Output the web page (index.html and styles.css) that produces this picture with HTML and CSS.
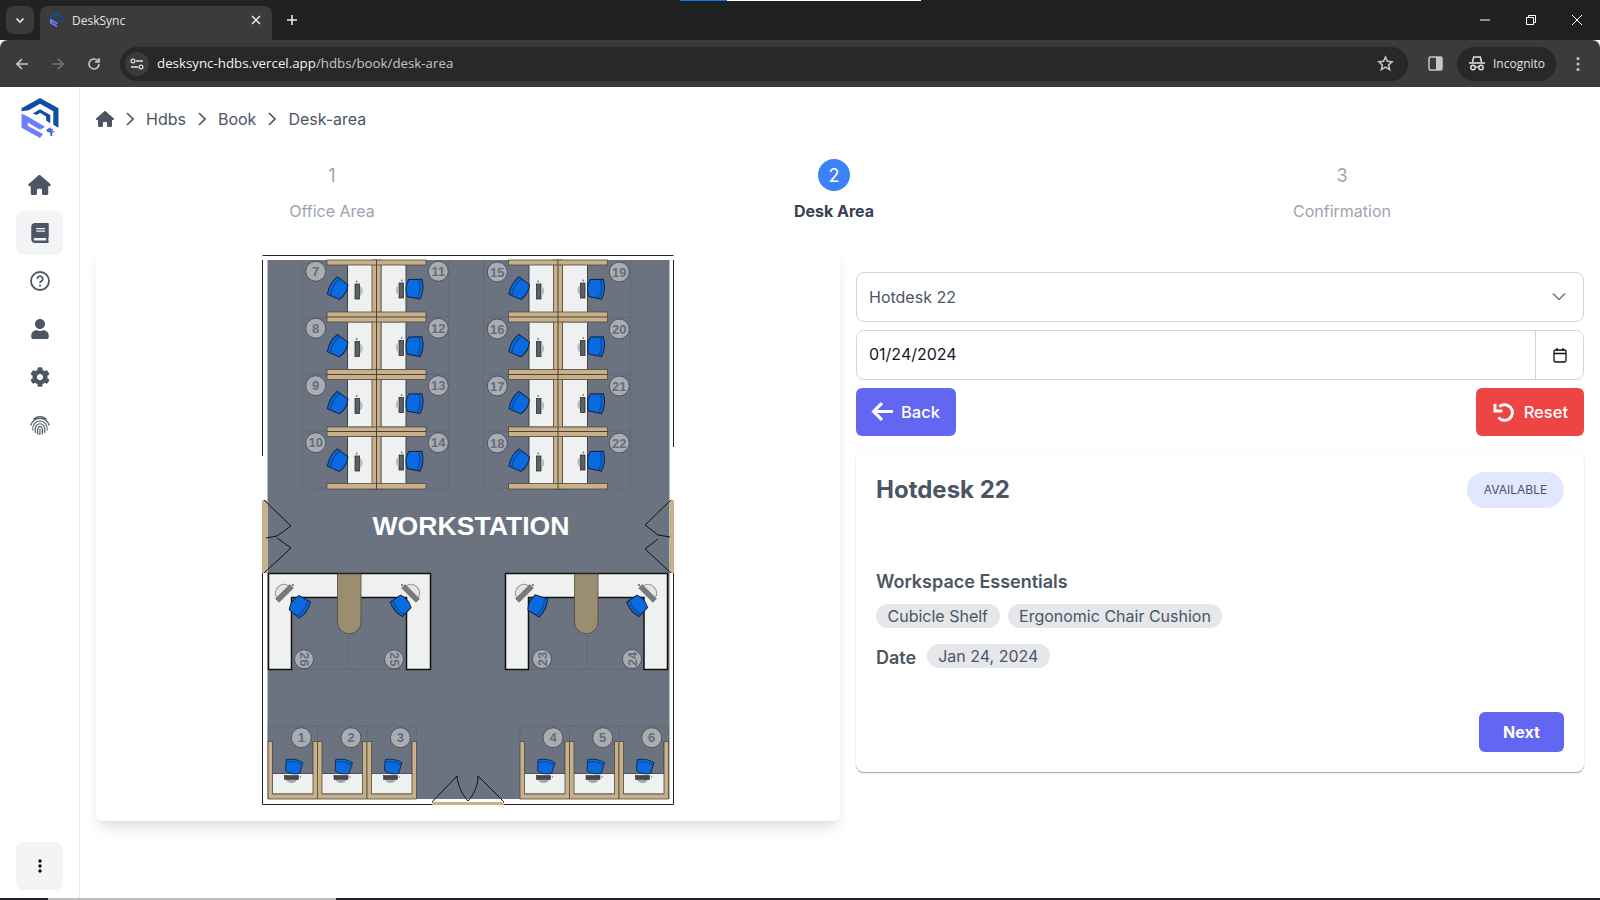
FILE: index.html
```html
<!DOCTYPE html>
<html lang="en">
<head>
    <meta charset="UTF-8">
    <title>DeskSync</title>
    <link rel="stylesheet" href="styles.css">
</head>
<body>

    <div class="load-bar"><span class="load-blue"></span><span class="load-white"></span></div>

    <!-- browser chrome -->
    <div class="tabstrip">
        <div class="tab-list">
            <svg width="12" height="12" viewBox="0 0 12 12"><path d="M2.5 4.5 6 8l3.5-3.5" fill="none" stroke="#e8eaed" stroke-width="1.6"/></svg>
        </div>
        <div class="tab">
            <svg class="favicon" width="13" height="14" viewBox="0 0 36 39">
                <path d="M0 10 18 0l18 10v19l-5-3V13L18 6 7 12l-7 1z" fill="#0b4f9e"/>
                <path d="M0 15l23 13-5 3L6 24v3l15 8-3 4L0 29z" fill="#6b7cff"/>
            </svg>
            <span class="tab-title">DeskSync</span>
            <svg width="10" height="10" viewBox="0 0 10 10"><path d="M1 1l8 8M9 1 1 9" stroke="#e8eaed" stroke-width="1.5"/></svg>
        </div>
        <div class="new-tab">
            <svg width="12" height="12" viewBox="0 0 12 12"><path d="M6 1v10M1 6h10" stroke="#e8eaed" stroke-width="1.6"/></svg>
        </div>
        <div class="win-controls">
            <div class="win-btn"><svg width="12" height="12" viewBox="0 0 12 12"><path d="M1 6h10" stroke="#fff" stroke-width="1"/></svg></div>
            <div class="win-btn"><svg width="12" height="12" viewBox="0 0 12 12"><path d="M3.5 3V1.5h7v7H9M1.5 3.5h7v7h-7z" fill="none" stroke="#fff" stroke-width="1"/></svg></div>
            <div class="win-btn"><svg width="12" height="12" viewBox="0 0 12 12"><path d="M1 1l10 10M11 1 1 11" stroke="#fff" stroke-width="1"/></svg></div>
        </div>
    </div>
    <div class="toolbar">
        <div class="tool-btn"><svg width="16" height="16" viewBox="0 0 16 16"><path d="M14 8H3M8 3 3 8l5 5" fill="none" stroke="#c7c7c7" stroke-width="1.7"/></svg></div>
        <div class="tool-btn"><svg width="16" height="16" viewBox="0 0 16 16"><path d="M2 8h11M8 3l5 5-5 5" fill="none" stroke="#737373" stroke-width="1.7"/></svg></div>
        <div class="tool-btn"><svg width="16" height="16" viewBox="0 0 16 16"><path d="M13 8a5 5 0 1 1-1.6-3.7L13 6M13 2v4H9" fill="none" stroke="#c7c7c7" stroke-width="1.6"/></svg></div>
        <div class="omnibox">
            <div class="site-info">
                <svg width="14" height="12" viewBox="0 0 14 12"><path d="M6 3h7M1 9h7" stroke="#e3e3e3" stroke-width="1.4"/><circle cx="3" cy="3" r="1.9" fill="none" stroke="#e3e3e3" stroke-width="1.2"/><circle cx="11" cy="9" r="1.9" fill="none" stroke="#e3e3e3" stroke-width="1.2"/></svg>
            </div>
            <div class="url"><span class="url-host">desksync-hdbs.vercel.app</span>/hdbs/book/desk-area</div>
            <svg class="star" width="17" height="17" viewBox="0 0 24 24"><path d="M12 3l2.8 6 6.5.7-4.9 4.4 1.4 6.5L12 17.2 6.2 20.6l1.4-6.5L2.7 9.700l6.500-.7z" fill="none" stroke="#c7c7c7" stroke-width="2.2"/></svg>
        </div>
        <div class="tool-btn panel-btn"><svg width="15" height="15" viewBox="0 0 15 15"><rect x="1" y="1" width="13" height="13" rx="1.5" fill="none" stroke="#c7c7c7" stroke-width="1.5"/><rect x="8" y="1" width="6" height="13" fill="#c7c7c7"/></svg></div>
        <div class="incognito">
            <svg width="16" height="15" viewBox="0 0 16 15"><path d="M3.500 6 4.700 1h6.600l1.200 5M0 7h16" fill="none" stroke="#e3e3e3" stroke-width="1.500"/><circle cx="4" cy="11.500" r="2.200" fill="none" stroke="#e3e3e3" stroke-width="1.400"/><circle cx="12" cy="11.500" r="2.200" fill="none" stroke="#e3e3e3" stroke-width="1.400"/><path d="M6.200 11h3.600" stroke="#e3e3e3" stroke-width="1.200"/></svg>
            <span>Incognito</span>
        </div>
        <div class="tool-btn"><svg width="4" height="16" viewBox="0 0 4 16"><circle cx="2" cy="2.500" r="1.500" fill="#c7c7c7"/><circle cx="2" cy="8" r="1.500" fill="#c7c7c7"/><circle cx="2" cy="13.500" r="1.500" fill="#c7c7c7"/></svg></div>
    </div>

    <div class="app">
        <div class="sidebar">
            <div>
                <svg class="logo" width="38" height="40" viewBox="0 0 36 39">
                    <path d="M0 10 18 0l18 10v19l-5-3V13L18 5.500 7 12l-7 1z" fill="#0b4f9e"/>
                    <path d="M11 15l7-4 10 5.500v8L24 22v-4l-6-3.500-3 2z" fill="#0b4f9e"/>
                    <path d="M0 15l6 3 17 10-5 3L6 24v3l15 8-3 4L0 29z" fill="#6b7cff"/>
                    <path d="M24 31l4-2.500 1 2 2-1-1 3h3l-3 1.500V37h-2v-3l-3-1z" fill="#3f6fd8"/>
                </svg>
                <div class="nav">
                    <div class="nav-item">
                        <svg width="23" height="20" viewBox="0 0 576 512"><path d="M575.800 255.500c0 18-15 32.100-32 32.100h-32l.7 160.200c0 2.700-.2 5.400-.5 8.100V472c0 22.100-17.900 40-40 40H456c-1.100 0-2.200 0-3.300-.1-1.400.1-2.800.1-4.200.1H392c-22.100 0-40-17.900-40-40v-88c0-17.700-14.300-32-32-32H256c-17.700 0-32 14.300-32 32v88c0 22.100-17.900 40-40 40H128.100c-1.500 0-3-.1-4.500-.2-1.200.1-2.400.2-3.600.2H104c-22.100 0-40-17.900-40-40V360c0-.9 0-1.900.1-2.800V287.600H32c-18 0-32-14-32-32.100 0-9 3-17 10-24L266.400 8c7-7 15-8 22-8s15 2 21 7L564.800 231.500c8 7 12 15 11 24z"/></svg>
                    </div>
                    <div class="nav-item active">
                        <svg width="18" height="20" viewBox="0 0 448 512"><path d="M448 360V24c0-13.3-10.7-24-24-24H96C43 0 0 43 0 96v320c0 53 43 96 96 96h328c13.3 0 24-10.7 24-24v-16c0-7.5-3.5-14.3-8.9-18.7-4.2-15.4-4.2-59.3 0-74.7 5.4-4.3 8.9-11.1 8.900-18.600zM128 134c0-3.300 2.700-6 6-6h212c3.300 0 6 2.700 6 6v20c0 3.300-2.700 6-6 6H134c-3.300 0-6-2.700-6-6v-20zm0 64c0-3.300 2.700-6 6-6h212c3.300 0 6 2.700 6 6v20c0 3.300-2.700 6-6 6H134c-3.300 0-6-2.700-6-6v-20zm253.400 250H96c-17.700 0-32-14.300-32-32 0-17.600 14.400-32 32-32h285.400c-1.900 17.100-1.900 46.900 0 64z"/></svg>
                    </div>
                    <div class="nav-item">
                        <svg width="20" height="20" viewBox="0 0 20 20"><circle cx="10" cy="10" r="9" fill="none" stroke="#4b5563" stroke-width="1.800"/><path d="M7.300 7.800a2.700 2.700 0 1 1 4.200 2.300c-1 .6-1.500 1-1.500 2" fill="none" stroke="#4b5563" stroke-width="1.800"/><circle cx="10" cy="14.600" r="1.100"/></svg>
                    </div>
                    <div class="nav-item">
                        <svg width="18" height="20" viewBox="0 0 448 512"><path d="M224 256c70.700 0 128-57.300 128-128S294.700 0 224 0 96 57.300 96 128s57.300 128 128 128zm89.600 32h-16.700c-22.200 10.200-46.900 16-72.900 16s-50.600-5.800-72.900-16h-16.700C60.200 288 0 348.200 0 422.400V464c0 26.500 21.500 48 48 48h352c26.500 0 48-21.500 48-48v-41.600c0-74.200-60.200-134.400-134.400-134.400z"/></svg>
                    </div>
                    <div class="nav-item">
                        <svg width="20" height="20" viewBox="0 0 512 512"><path d="M487.400 315.700l-42.600-24.600c4.300-23.200 4.300-47 0-70.200l42.600-24.600c4.900-2.800 7.100-8.600 5.500-14-11.100-35.600-30-67.800-54.700-94.600-3.800-4.100-10-5.100-14.800-2.300L380.800 110c-17.900-15.400-38.500-27.300-60.800-35.100V25.800c0-5.600-3.900-10.500-9.400-11.700-36.700-8.200-74.300-7.800-109.200 0-5.500 1.200-9.400 6.100-9.400 11.700V75c-22.200 7.900-42.800 19.800-60.800 35.100L88.700 85.500c-4.900-2.800-11-1.900-14.800 2.300-24.700 26.700-43.600 58.900-54.700 94.600-1.700 5.400.6 11.200 5.500 14L67.300 221c-4.300 23.200-4.300 47 0 70.200l-42.600 24.600c-4.900 2.800-7.100 8.600-5.500 14 11.100 35.600 30 67.800 54.700 94.600 3.800 4.100 10 5.100 14.800 2.300l42.600-24.600c17.900 15.400 38.500 27.300 60.800 35.100v49.200c0 5.600 3.900 10.500 9.400 11.700 36.700 8.200 74.300 7.800 109.200 0 5.500-1.200 9.400-6.100 9.400-11.700v-49.200c22.200-7.900 42.800-19.800 60.800-35.100l42.600 24.600c4.900 2.800 11 1.900 14.800-2.300 24.700-26.700 43.600-58.900 54.700-94.600 1.500-5.500-.7-11.300-5.600-14.100zM256 336c-44.100 0-80-35.900-80-80s35.900-80 80-80 80 35.900 80 80-35.900 80-80 80z"/></svg>
                    </div>
                    <div class="nav-item">
                        <svg width="20" height="20" viewBox="0 0 20 20" fill="none" stroke="#4b5563" stroke-width="1.150"><path d="M3.500 4.500C7 .6 13 .6 16.500 4.500"/><path d="M.8 10.500C2.300 5.500 6 3.300 10 3.300s7.700 2.200 9.200 7.200"/><path d="M2.800 15.500C2.300 9.500 5.500 6 10 6s7.700 3.500 7.200 9.500"/><path d="M5.300 18C4.600 12 6.700 8.700 10 8.700s5.400 3.300 4.700 9.300"/><path d="M7.800 19.500C7 14.500 8.200 11.300 10 11.300s3 3.200 2.200 8.200"/><path d="M10 14c0 2.500 0 4-.2 6"/></svg>
                    </div>
                </div>
            </div>
            <div class="more-btn">
                <svg width="4" height="14" viewBox="0 0 4 14"><circle cx="2" cy="2" r="1.700" fill="#111"/><circle cx="2" cy="7" r="1.700" fill="#111"/><circle cx="2" cy="12" r="1.700" fill="#111"/></svg>
            </div>
        </div>

        <div class="content">
            <div class="breadcrumb">
                <svg width="18" height="16" viewBox="0 0 576 512"><path d="M575.800 255.500c0 18-15 32.100-32 32.100h-32l.7 160.200c0 2.700-.2 5.400-.5 8.100V472c0 22.100-17.900 40-40 40H456c-1.100 0-2.200 0-3.300-.1-1.400.1-2.800.1-4.200.1H392c-22.100 0-40-17.900-40-40v-88c0-17.700-14.300-32-32-32H256c-17.700 0-32 14.300-32 32v88c0 22.100-17.900 40-40 40H128.100c-1.500 0-3-.1-4.500-.2-1.200.1-2.400.2-3.600.2H104c-22.100 0-40-17.900-40-40V360c0-.9 0-1.900.1-2.800V287.600H32c-18 0-32-14-32-32.100 0-9 3-17 10-24L266.400 8c7-7 15-8 22-8s15 2 21 7L564.800 231.500c8 7 12 15 11 24z"/></svg>
                <svg class="crumb-sep" width="8" height="14" viewBox="0 0 8 14"><path d="M1 1l6 6-6 6" fill="none" stroke="#4b5563" stroke-width="1.600"/></svg>
                <span>Hdbs</span>
                <svg class="crumb-sep" width="8" height="14" viewBox="0 0 8 14"><path d="M1 1l6 6-6 6" fill="none" stroke="#4b5563" stroke-width="1.600"/></svg>
                <span>Book</span>
                <svg class="crumb-sep" width="8" height="14" viewBox="0 0 8 14"><path d="M1 1l6 6-6 6" fill="none" stroke="#4b5563" stroke-width="1.600"/></svg>
                <span>Desk-area</span>
            </div>

            <div class="stepper">
                <div class="step">
                    <div class="step-num">1</div>
                    <div class="step-label">Office Area</div>
                </div>
                <div class="step current">
                    <div class="step-num">2</div>
                    <div class="step-label">Desk Area</div>
                </div>
                <div class="step">
                    <div class="step-num">3</div>
                    <div class="step-label">Confirmation</div>
                </div>
            </div>

            <div class="columns">
                <div class="map-card">
                    <svg class="floorplan" width="412" height="550" viewBox="262 255 412 550">
                        <defs>
                            <g id="chair">
                                <path d="M-10-7Q0-11 10-7L8.500 6Q0 10-8.500 6Z" fill="#0a6be0" stroke="#16233a" stroke-width="1"/>
                                <path d="M-9.500-4Q0-8 9.500-4" fill="none" stroke="#0a4fa8" stroke-width="1.600"/>
                            </g>
                            <g id="pc">
                                <rect x="-2" y="-7" width="4.500" height="15" fill="#5b5f66" stroke="#2f3237" stroke-width=".8"/>
                                <path d="M3-5A6 6 0 0 1 3 5Z" fill="#b8bbbf"/>
                                <circle cx="-.3" cy="-9.500" r=".9" fill="#777"/>
                            </g>
                            <g id="pc-low">
                                <rect x="-7" y="-2" width="14" height="4" fill="#44474d" stroke="#2f3237" stroke-width=".6"/>
                                <path d="M-5 2.500A5 3 0 0 0 5 2.500Z" fill="#a2a5a9"/>
                                <circle cx="9" cy="-.500" r=".8" fill="#777"/>
                            </g>
                            <g id="keyboard">
                                <rect x="-10" y="-.5" width="20" height="5" fill="#777a7f" stroke="#55585e" stroke-width=".6"/>
                                <path d="M-8-1A8 6 0 0 1 8-1" fill="#e4e5e6" stroke="#8e9196" stroke-width="1"/>
                                <circle cx="12" cy="2" r="1" fill="#666"/>
                            </g>
                            <g id="bay">
                                <rect x="347.500" y="265" width="24.500" height="47" fill="#eff0f0"/>
                                <rect x="381.500" y="265" width="24.500" height="47" fill="#eff0f0"/>
                                <path d="M347.500 265V312M406 265V312" stroke="#3f4650" stroke-width="1"/>
                                <use href="#chair" transform="translate(338.500 289) rotate(-60)"/>
                                <use href="#chair" transform="translate(414 288.500) rotate(95)"/>
                                <use href="#pc" transform="translate(357 291)"/>
                                <use href="#pc" transform="translate(401.500 290) scale(-1 1)"/>
                            </g>
                            <g id="cluster">
                                <g class="dots">
                                    <path d="M302 260V488M449 260V488M302 317H449M302 374H449M302 431H449M302 488H449"/>
                                </g>
                                <use href="#bay"/>
                                <use href="#bay" y="57.500"/>
                                <use href="#bay" y="114.500"/>
                                <use href="#bay" y="172"/>
                                <rect x="372" y="260" width="9" height="229" class="tan"/>
                                <rect x="327" y="260" width="99" height="5" class="tan"/>
                                <rect x="327" y="312" width="99" height="10" class="tan"/>
                                <rect x="327" y="369.500" width="99" height="10" class="tan"/>
                                <rect x="327" y="427" width="99" height="9.500" class="tan"/>
                                <rect x="327" y="483.500" width="99" height="5.500" class="tan"/>
                                <path d="M376.500 260V489M327 317H426M327 374.500H426M327 431.500H426" stroke="#4a4436" stroke-width="1"/>
                            </g>
                            <g id="cubicle">
                                <rect x="268" y="773.500" width="49" height="20" fill="#eff0f0"/>
                                <path d="M272 741.500V773.500H313V741.500" fill="none" stroke="#4d5561" stroke-width="1"/>
                                <path d="M268 741.500H272.500V794H313V741.500H317.500V799H268Z" class="tan"/>
                                <use href="#chair" transform="translate(293.500 767) rotate(10) scale(.85)"/>
                                <use href="#pc-low" transform="translate(291.500 777.500)"/>
                            </g>
                            <g id="cubicles">
                                <path class="dots" d="M268 741V726H416.500V741M317.500 726V741M367 726V741"/>
                                <use href="#cubicle"/>
                                <use href="#cubicle" x="49.500"/>
                                <use href="#cubicle" x="99"/>
                            </g>
                        </defs>

                        <rect x="262" y="255" width="412" height="550" fill="#fff"/>
                        <rect x="267.500" y="260" width="402" height="539" fill="#6b7280"/>
                        <path d="M262.500 255.500H673.500M262.500 260V456M673.500 260V447M262.500 570V804.500H432M504 804.500H673.500V570" fill="none" stroke="#222" stroke-width="1"/>

                        <!-- doors -->
                        <rect x="262" y="500" width="5.500" height="73" class="door"/>
                        <rect x="669.500" y="500" width="4.500" height="73" class="door"/>
                        <rect x="432" y="802" width="72" height="3" class="door"/>
                        <path class="swing" d="M264 500 291 526 277 536 266 538M264 573 291 548 277 538"/>
                        <path class="swing" d="M671 500 645 525 658 535 670 537M671 573 645 549 658 539"/>
                        <path class="swing" d="M432 802 457 776C458 786 462 794 468 801M504 802 478 776C478 786 474 794 468 801"/>

                        <use href="#cluster"/>
                        <use href="#cluster" x="181.500"/>

                        <g class="seat">
                            <circle cx="315.700" cy="271.300" r="10"/><text x="315.700" y="276">7</text>
                            <circle cx="315.700" cy="328.300" r="10"/><text x="315.700" y="333">8</text>
                            <circle cx="315.700" cy="385.700" r="10"/><text x="315.700" y="390.400">9</text>
                            <circle cx="315.700" cy="442.700" r="10"/><text x="315.700" y="447.400">10</text>
                            <circle cx="438.300" cy="271.300" r="10"/><text x="438.300" y="276">11</text>
                            <circle cx="438.300" cy="328.300" r="10"/><text x="438.300" y="333">12</text>
                            <circle cx="438.300" cy="385.700" r="10"/><text x="438.300" y="390.400">13</text>
                            <circle cx="438.300" cy="442.700" r="10"/><text x="438.300" y="447.400">14</text>
                            <circle cx="497.300" cy="272" r="10"/><text x="497.300" y="276.700">15</text>
                            <circle cx="497.300" cy="329" r="10"/><text x="497.300" y="333.700">16</text>
                            <circle cx="497.300" cy="386" r="10"/><text x="497.300" y="390.700">17</text>
                            <circle cx="497.300" cy="443" r="10"/><text x="497.300" y="447.700">18</text>
                            <circle cx="619.300" cy="272" r="10"/><text x="619.300" y="276.700">19</text>
                            <circle cx="619.300" cy="329" r="10"/><text x="619.300" y="333.700">20</text>
                            <circle cx="619.300" cy="386" r="10"/><text x="619.300" y="390.700">21</text>
                            <circle cx="619.300" cy="443" r="10"/><text x="619.300" y="447.700">22</text>
                        </g>

                        <text class="plan-title" x="471" y="534.500">WORKSTATION</text>

                        <!-- corner desks -->
                        <path class="dots" d="M291.500 669.500H406.500M348.500 633V669.500"/>
                        <path class="corner" d="M268.500 573.500H430.500V669.500H406.500V597.500H291.500V669.500H268.500Z"/>
                        <path class="pill" d="M337.500 574V622a11.750 11.750 0 0 0 23.500 0V574Z"/>
                        <path class="dots" d="M528.500 669.500H644M587 633V669.500"/>
                        <path class="corner" d="M505.500 573.500H667.500V669.500H644V597.500H528.500V669.500H505.500Z"/>
                        <path class="pill" d="M574.500 574V622a11.750 11.750 0 0 0 23.500 0V574Z"/>
                        <use href="#chair" transform="translate(299 606) rotate(125)"/>
                        <use href="#chair" transform="translate(401.500 605) rotate(-130) scale(.95)"/>
                        <use href="#chair" transform="translate(537 605) rotate(115)"/>
                        <use href="#chair" transform="translate(638 605) rotate(-130) scale(.95)"/>
                        <use href="#keyboard" transform="translate(283 592) rotate(-45)"/>
                        <use href="#keyboard" transform="translate(412 592) rotate(45) scale(-1 1)"/>
                        <use href="#keyboard" transform="translate(523 592) rotate(-45)"/>
                        <use href="#keyboard" transform="translate(649 592) rotate(45) scale(-1 1)"/>
                        <g class="seat">
                            <circle cx="304" cy="659.300" r="9.500"/><text transform="translate(304 659.300) rotate(90)" y="4.500">26</text>
                            <circle cx="394" cy="659.300" r="9.500"/><text transform="translate(394 659.300) rotate(90)" y="4.500">25</text>
                            <circle cx="542" cy="659" r="9.500"/><text transform="translate(542 659) rotate(-90)" y="4.500">23</text>
                            <circle cx="632" cy="659" r="9.500"/><text transform="translate(632 659) rotate(-90)" y="4.500">24</text>
                        </g>

                        <!-- bottom row -->
                        <use href="#cubicles"/>
                        <use href="#cubicles" x="252"/>
                        <g class="seat">
                            <circle cx="301.300" cy="737.700" r="10"/><text x="301.300" y="742.400">1</text>
                            <circle cx="351" cy="737.700" r="10"/><text x="351" y="742.400">2</text>
                            <circle cx="400.300" cy="737.700" r="10"/><text x="400.300" y="742.400">3</text>
                            <circle cx="553" cy="737.700" r="10"/><text x="553" y="742.400">4</text>
                            <circle cx="602.700" cy="737.700" r="10"/><text x="602.700" y="742.400">5</text>
                            <circle cx="651.700" cy="737.700" r="10"/><text x="651.700" y="742.400">6</text>
                        </g>
                    </svg>
                </div>

                <div class="form-col">
                    <div class="field field-select">
                        <span>Hotdesk 22</span>
                        <svg width="16" height="10" viewBox="0 0 16 10"><path d="M2 1.500l6 6 6-6" fill="none" stroke="#6b7280" stroke-width="1.500"/></svg>
                    </div>
                    <div class="field field-date">
                        <span class="date-value">01/24/2024</span>
                        <div class="date-btn">
                            <svg width="14" height="16" viewBox="0 0 14 16"><rect x="1" y="3" width="12" height="12" rx="1.500" fill="none" stroke="#111" stroke-width="1.300"/><path d="M1 6.500h12M4 1v3M10 1v3" stroke="#111" stroke-width="1.300"/></svg>
                        </div>
                    </div>
                    <div class="actions">
                        <button class="btn btn-back">
                            <svg width="23" height="21" viewBox="0 0 22 20"><path d="M21 10H3M10.500 2 2.500 10l8 8" fill="none" stroke="#fff" stroke-width="3"/></svg>
                            Back
                        </button>
                        <button class="btn btn-reset">
                            <svg width="22" height="22" viewBox="0 0 22 22"><path d="M6.500 5.500a8 8 0 1 1-1 11" fill="none" stroke="#fff" stroke-width="3"/><path d="M2 2.500V10h7.500" fill="none" stroke="#fff" stroke-width="3"/></svg>
                            Reset
                        </button>
                    </div>

                    <div class="desk-card">
                        <div class="desk-head">
                            <h2>Hotdesk 22</h2>
                            <span class="badge">AVAILABLE</span>
                        </div>
                        <h3>Workspace Essentials</h3>
                        <div class="chips">
                            <span class="chip">Cubicle Shelf</span>
                            <span class="chip">Ergonomic Chair Cushion</span>
                        </div>
                        <div class="date-row">
                            <span class="date-label">Date</span>
                            <span class="chip">Jan 24, 2024</span>
                        </div>
                        <div class="desk-foot">
                            <button class="btn-next">Next</button>
                        </div>
                    </div>
                </div>
            </div>
        </div>
    </div>

    <div class="taskbar"><span class="task-light"></span></div>

</body>
</html>
```

FILE: styles.css
```css
* {
    box-sizing: border-box;
}
body {
    margin: 0;
    height: 900px;
    overflow: hidden;
    display: flex;
    flex-direction: column;
    background-color: #fff;
    font-family: Inter, "Liberation Sans", sans-serif;
    color: #4b5563;
}
.load-bar {
    position: absolute;
    top: 0;
    left: 680px;
    display: flex;
    height: 1px;
}
.load-blue {
    width: 47px;
    background-color: #1a73e8;
}
.load-white {
    width: 194px;
    background-color: #fff;
}

/* browser chrome */
.tabstrip {
    height: 40px;
    flex: none;
    display: flex;
    align-items: flex-start;
    padding: 6px 0 0 6px;
    background-color: #202222;
}
.tab-list {
    width: 28px;
    height: 28px;
    margin-right: 6px;
    display: flex;
    align-items: center;
    justify-content: center;
    background-color: #3b3b3b;
    border-radius: 8px;
}
.tab {
    width: 232px;
    height: 34px;
    display: flex;
    align-items: center;
    padding: 0 11px 6px 10px;
    background-color: #3b3b3b;
    border-radius: 8px 8px 0 0;
    color: #e3e3e3;
    font-family: "Open Sans", sans-serif;
    font-size: 12px;
}
.tab-title {
    flex: 1;
    margin-left: 9px;
}
.new-tab {
    width: 28px;
    height: 28px;
    margin-left: 6px;
    display: flex;
    align-items: center;
    justify-content: center;
}
.win-controls {
    display: flex;
    margin-left: auto;
    margin-top: -6px;
}
.win-btn {
    width: 46px;
    height: 40px;
    display: flex;
    align-items: center;
    justify-content: center;
}
.toolbar {
    height: 47px;
    flex: none;
    display: flex;
    align-items: center;
    padding: 0 4px;
    background-color: #3b3b3b;
    border-radius: 8px 8px 0 0;
}
.tool-btn {
    width: 36px;
    height: 34px;
    display: flex;
    align-items: center;
    justify-content: center;
}
.panel-btn {
    margin-left: 9px;
    margin-right: 4px;
}
.omnibox {
    width: 1288px;
    height: 34px;
    margin-left: 8px;
    display: flex;
    align-items: center;
    padding: 0 14px 0 5px;
    background-color: #282828;
    border-radius: 17px;
}
.site-info {
    width: 24px;
    height: 24px;
    display: flex;
    align-items: center;
    justify-content: center;
    background-color: #3b3b3b;
    border-radius: 50%;
}
.url {
    flex: 1;
    margin-left: 8px;
    padding-bottom: 2px;
    color: #c4c7c5;
    font-family: "Open Sans", sans-serif;
    font-size: 13.300px;
}
.url-host {
    color: #f1f1f1;
}
.incognito {
    width: 99px;
    height: 34px;
    margin-right: 4px;
    display: flex;
    align-items: center;
    gap: 8px;
    padding: 0 0 1px 12px;
    background-color: #282828;
    border-radius: 17px;
    color: #e3e3e3;
    font-family: "Open Sans", sans-serif;
    font-size: 12px;
}

/* app */
.app {
    flex: 1;
    display: flex;
    min-height: 0;
}
.sidebar {
    width: 80px;
    flex: none;
    display: flex;
    flex-direction: column;
    justify-content: space-between;
    padding: 11px 16px 8px;
    border-right: 1px solid #e5e7eb;
}
.logo {
    display: block;
    margin-left: 5px;
}
.nav {
    display: flex;
    flex-direction: column;
    gap: 4px;
    margin-top: 24.500px;
}
.nav-item {
    height: 44px;
    display: flex;
    align-items: center;
    justify-content: center;
    border-radius: 8px;
    fill: #4b5563;
}
.nav-item.active {
    background-color: #f3f4f6;
}
.more-btn {
    height: 48px;
    display: flex;
    align-items: center;
    justify-content: center;
    background-color: #f3f4f6;
    border-radius: 8px;
}
.content {
    flex: 1;
    padding: 20px 16px 0;
    min-width: 0;
}
.breadcrumb {
    height: 24px;
    display: flex;
    align-items: center;
    gap: 12px;
    fill: #4b5563;
    font-size: 16px;
}
.stepper {
    display: grid;
    grid-template-columns: 472px 532px 484px;
    margin-top: 28px;
}
.step {
    display: flex;
    flex-direction: column;
    align-items: center;
    color: #9ca3af;
}
.step-num {
    width: 32px;
    height: 32px;
    display: flex;
    align-items: center;
    justify-content: center;
    border-radius: 50%;
    font-size: 18px;
}
.step-label {
    margin-top: 10px;
    line-height: 20px;
    font-size: 16px;
}
.step.current .step-num {
    background-color: #3b82f6;
    color: #fff;
}
.step.current .step-label {
    color: #374151;
    font-weight: 700;
}
.columns {
    display: grid;
    grid-template-columns: 744px 728px;
    gap: 16px;
    margin-top: 29px;
}
.map-card {
    height: 571px;
    padding-top: 5px;
    background-color: #fff;
    border-radius: 8px;
    box-shadow: 0 10px 15px -3px rgba(0, 0, 0, 0.1), 0 4px 6px -2px rgba(0, 0, 0, 0.05);
}
.floorplan {
    display: block;
    margin: 0 auto;
}
.tan {
    fill: #c8b08a;
    stroke: #4f4a3c;
    stroke-width: .8;
}
.door {
    fill: #c8b08a;
}
.dots {
    fill: none;
    stroke: #4f5664;
    stroke-width: .8;
    stroke-dasharray: 1 1.500;
}
.swing {
    fill: none;
    stroke: #111;
    stroke-width: 1;
}
.corner {
    fill: #eff0f0;
    stroke: #111;
    stroke-width: 1.500;
}
.pill {
    fill: #9b8d70;
    stroke: #4f4a3c;
    stroke-width: .8;
}
.seat circle {
    fill: #a9acb1;
    stroke: #4d5461;
    stroke-width: 1;
}
.seat text {
    fill: #666d79;
    font-family: "Liberation Sans", sans-serif;
    font-size: 13px;
    font-weight: 700;
    text-anchor: middle;
}
.plan-title {
    fill: #fff;
    font-family: "Liberation Sans", sans-serif;
    font-size: 26.600px;
    font-weight: 700;
    text-anchor: middle;
}

/* right column */
.form-col {
    padding-top: 22px;
}
.field {
    height: 50px;
    display: flex;
    align-items: center;
    margin-bottom: 8px;
    border: 1px solid #d1d5db;
    border-radius: 8px;
    font-size: 16px;
}
.field-select {
    justify-content: space-between;
    padding: 0 16px 0 12px;
    color: #4b5563;
}
.date-value {
    flex: 1;
    padding: 0 0 2px 12px;
    color: #111827;
}
.date-btn {
    width: 48px;
    height: 100%;
    display: flex;
    align-items: center;
    justify-content: center;
    border-left: 1px solid #d1d5db;
}
.actions {
    display: flex;
    justify-content: space-between;
    margin-bottom: 16px;
}
.btn {
    height: 48px;
    display: flex;
    align-items: center;
    gap: 7px;
    padding: 0 16px 1px;
    border: none;
    border-radius: 6px;
    color: #fff;
    font-family: inherit;
    font-size: 16.500px;
    font-weight: 500;
}
.btn-back {
    width: 100px;
    padding-left: 15px;
    background-color: #6366f1;
}
.btn-reset {
    width: 108px;
    gap: 9px;
    padding-left: 17px;
    background-color: #ef4444;
}
.desk-card {
    height: 320px;
    padding: 20px;
    background-color: #fff;
    border-radius: 8px;
    box-shadow: 0 1px 1px rgba(0, 0, 0, 0.35), 0 0 3px rgba(0, 0, 0, 0.06);
}
.desk-head {
    display: flex;
    justify-content: space-between;
    align-items: flex-start;
    height: 98px;
}
.desk-head h2 {
    margin: 1px 0 0;
    line-height: 34px;
    font-size: 24px;
    font-weight: 700;
}
.badge {
    width: 97px;
    height: 36px;
    display: flex;
    align-items: center;
    justify-content: center;
    padding-bottom: 1px;
    background-color: #e0e7ff;
    border-radius: 18px;
    font-size: 12px;
}
.desk-card h3 {
    margin: 0;
    line-height: 24px;
    font-size: 18px;
    font-weight: 600;
}
.chips {
    display: flex;
    gap: 8px;
    margin-top: 10px;
}
.chip {
    height: 24px;
    display: inline-flex;
    align-items: center;
    padding: 0 11.500px;
    background-color: #e5e7eb;
    border-radius: 12px;
    font-size: 16px;
}
.date-row {
    display: flex;
    align-items: flex-start;
    gap: 10.500px;
    margin-top: 16px;
}
.date-label {
    margin-top: 2px;
    line-height: 24px;
    font-size: 18px;
    font-weight: 600;
}
.desk-foot {
    display: flex;
    justify-content: flex-end;
    margin-top: 42px;
}
.btn-next {
    width: 85px;
    height: 40px;
    border: none;
    border-radius: 6px;
    background-color: #6366f1;
    color: #fff;
    font-family: inherit;
    font-size: 16px;
    font-weight: 700;
}
.taskbar {
    height: 2px;
    flex: none;
    background-color: #202124;
}
.task-light {
    display: block;
    width: 288px;
    height: 2px;
    margin-left: 48px;
    background-color: #bdbdbd;
}
```
